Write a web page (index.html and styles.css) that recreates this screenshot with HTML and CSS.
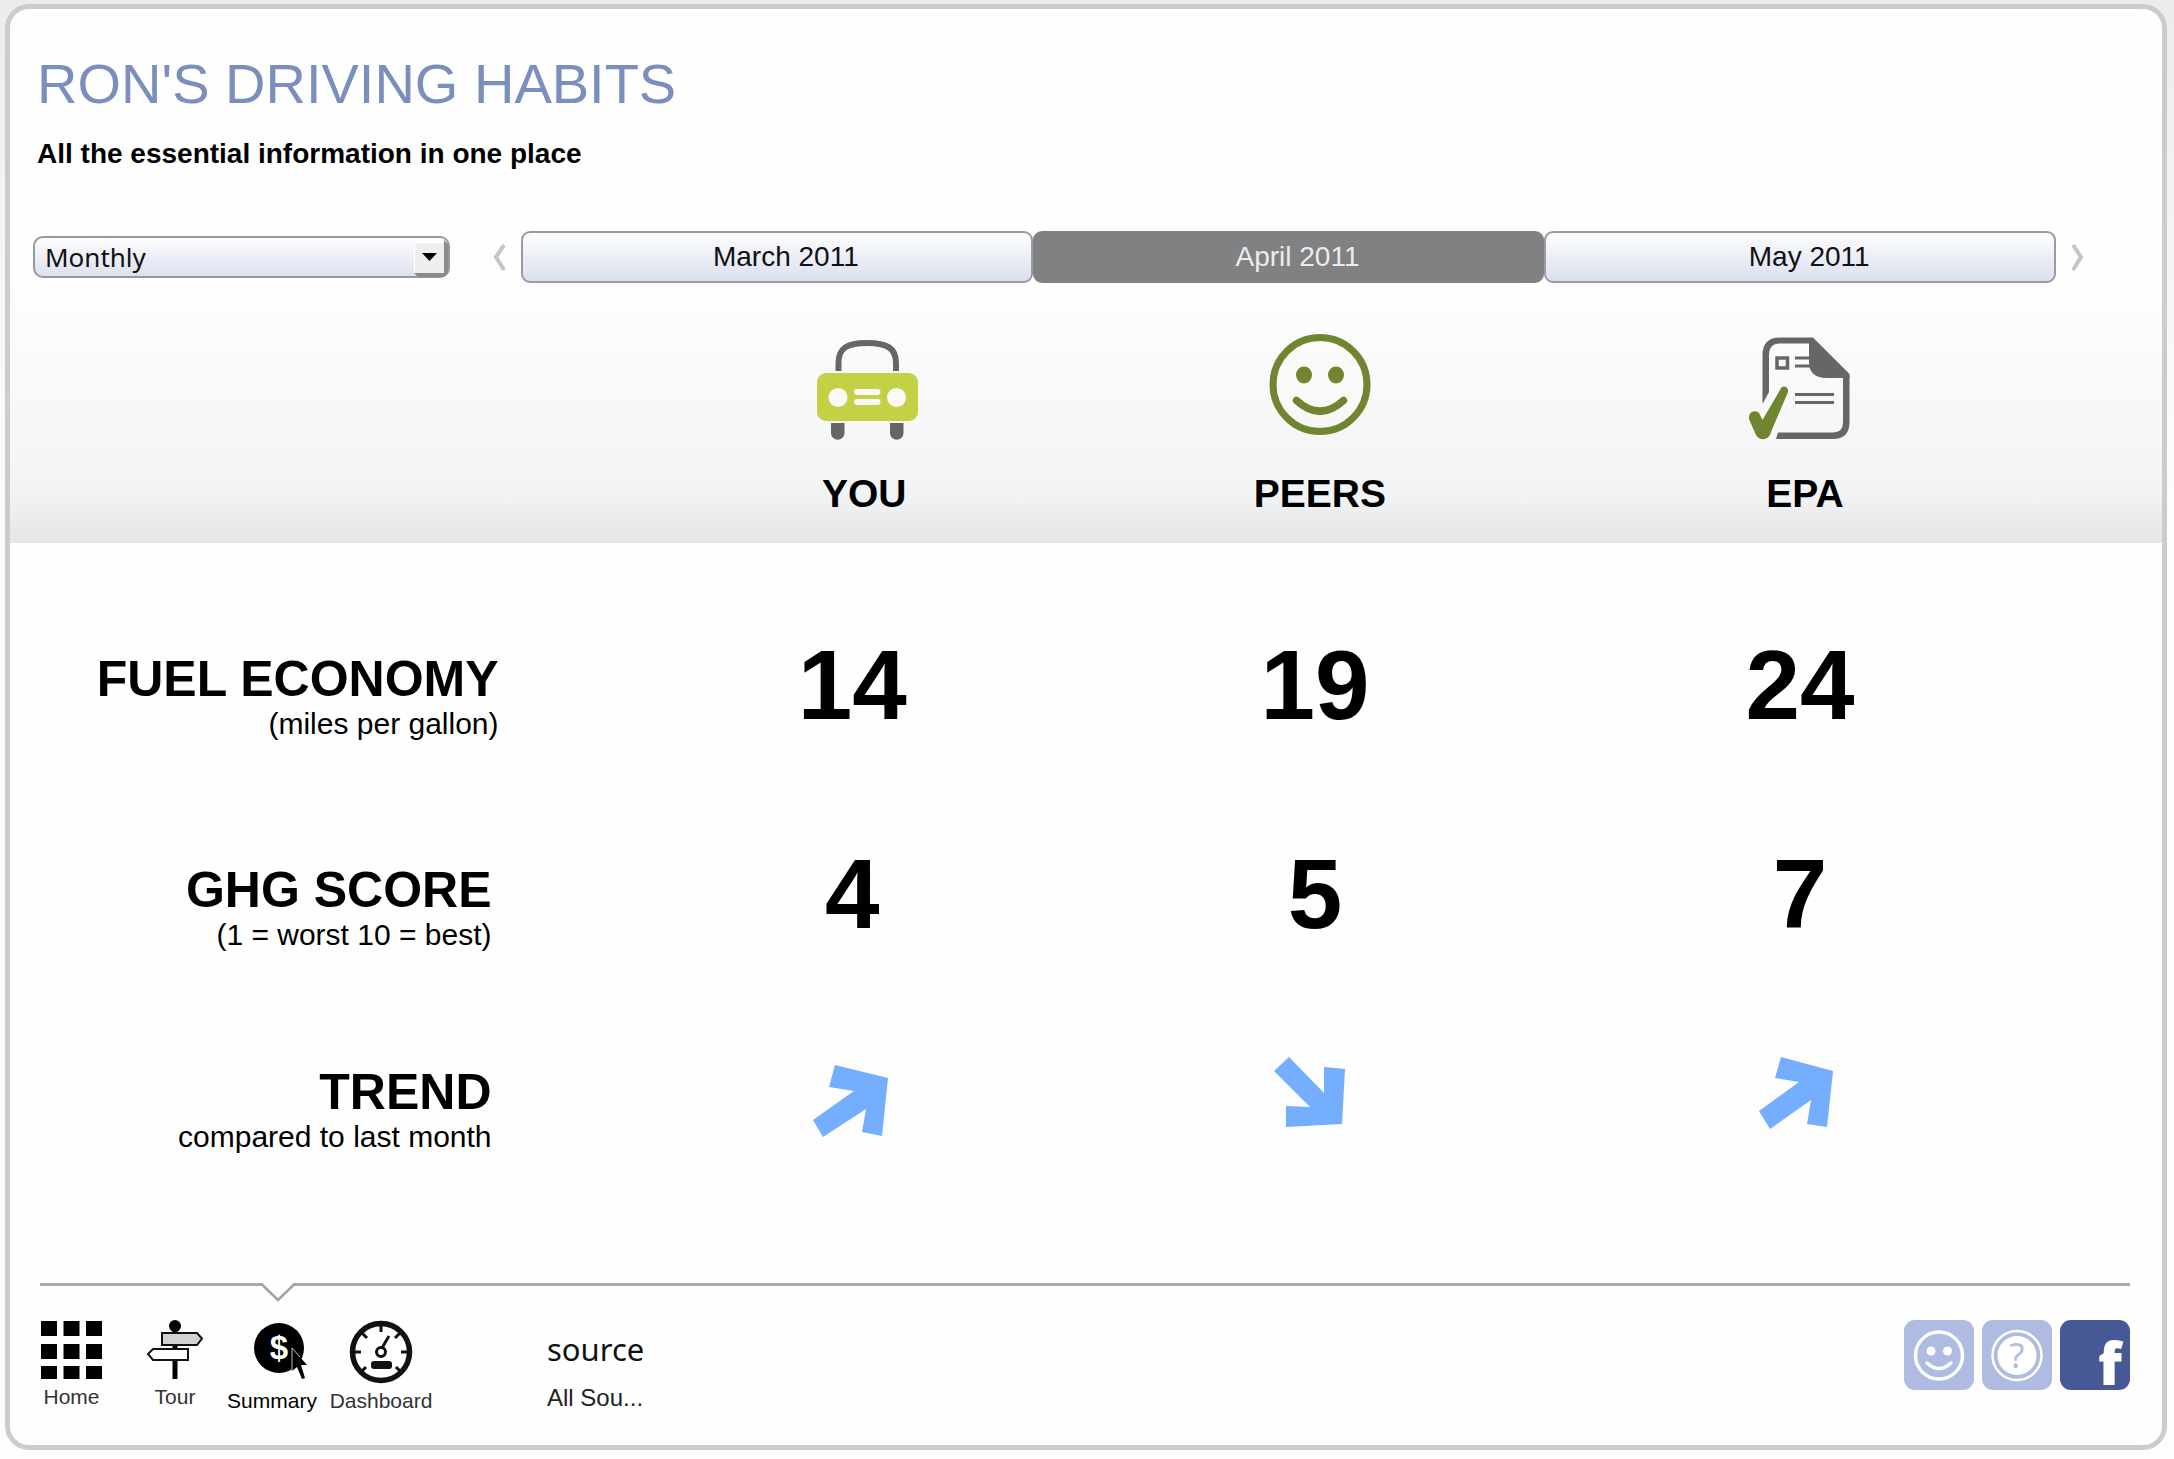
FILE: index.html
```
<!DOCTYPE html>
<html lang="en">
<head>
<meta charset="utf-8">
<meta name="viewport" content="width=device-width, initial-scale=1">
<title>Ron's Driving Habits</title>
<link rel="stylesheet" href="styles.css">
</head>
<body>
<main class="card">
  <header class="intro">
    <h1 class="title">RON'S DRIVING HABITS</h1>
    <p class="subtitle">All the essential information in one place</p>
  </header>

  <div class="toolbar">
    <div class="period">
      <select class="period-select" aria-label="Period">
        <option>Monthly</option>
        <option>Weekly</option>
        <option>Yearly</option>
      </select>
      <svg class="period-arrow" viewBox="0 0 36 42" aria-hidden="true">
        <path d="M4 41 L0 37 L30 37 L30 4 L34 8 V34 Q34 41 27 41 Z" fill="#8a8b8d"/>
        <path d="M0 7 H30 V37 H0 Z" fill="#efefef"/>
        <path d="M0 37 V6 H30" fill="none" stroke="#fff" stroke-width="2"/>
        <path d="M8 17 H23 L15.500 25 Z" fill="#000"/>
      </svg>
    </div>
    <button class="step step-prev" type="button" aria-label="Previous month">
      <svg width="13" height="27" viewBox="0 0 13 27" aria-hidden="true"><path d="M11 1 L3 13 L11 26" fill="none" stroke="#c4c4ca" stroke-width="4"/></svg>
    </button>
    <div class="months">
      <button class="month" type="button">March 2011</button>
      <button class="month month-current" type="button" aria-pressed="true">April 2011</button>
      <button class="month" type="button">May 2011</button>
    </div>
    <button class="step step-next" type="button" aria-label="Next month">
      <svg width="13" height="27" viewBox="0 0 13 27" aria-hidden="true"><path d="M2 1 L10 13 L2 26" fill="none" stroke="#c4c4ca" stroke-width="4"/></svg>
    </button>
  </div>

  <table class="summary">
    <colgroup><col class="col-label"><col class="col-you"><col class="col-peers"><col class="col-epa"></colgroup>
    <thead>
      <tr>
        <td></td>
        <th scope="col" class="head-you">
          <svg class="head-icon" width="108" height="106" viewBox="0 0 108 106" aria-hidden="true">
            <path d="M28.500 37 V29 C28.500 14 37 9 57 9 C77 9 86 14 86 29 V37" fill="none" stroke="#666" stroke-width="6"/>
            <rect x="7" y="39" width="101" height="48" rx="9" fill="#c4d144"/>
            <circle cx="28" cy="63.500" r="9.500" fill="#f9f9f9"/><circle cx="86.500" cy="63.500" r="9.500" fill="#f9f9f9"/>
            <rect x="44" y="55" width="26.500" height="6" rx="3" fill="#f9f9f9"/><rect x="44" y="65" width="26.500" height="6" rx="3" fill="#f9f9f9"/>
            <path d="M21 89 H34.500 V99 a6.750 6.750 0 0 1 -13.500 0 Z M80 89 H93.500 V99 a6.750 6.750 0 0 1 -13.500 0 Z" fill="#666"/>
          </svg>
          <span class="head-text">YOU</span>
        </th>
        <th scope="col">
          <svg class="head-icon" width="102" height="106" viewBox="0 0 102 106" aria-hidden="true">
            <circle cx="51" cy="50.500" r="47" fill="none" stroke="#6f852f" stroke-width="7"/>
            <ellipse cx="35" cy="41" rx="8" ry="8.500" fill="#6f852f"/><ellipse cx="67" cy="41" rx="8" ry="8.500" fill="#6f852f"/>
            <path d="M27.500 66.500 Q51 88 74.500 66.500" fill="none" stroke="#6f852f" stroke-width="7.500" stroke-linecap="round"/>
          </svg>
          <span class="head-text">PEERS</span>
        </th>
        <th scope="col" class="cell-last">
          <svg class="head-icon" width="112" height="106" viewBox="0 0 112 106" aria-hidden="true">
            <path d="M13.500 70 L20 58 V21 Q20 9.500 31 9.500 H60 V3.500 H31 Q13.500 3.500 13.500 21 Z" fill="#666"/>
            <path d="M29 98.500 H84 Q94 98.500 94 88 V42 H100.500 V88 Q100.500 105 84 105 H27 Z" fill="#666"/>
            <path d="M64 3.500 L100.500 40 V44 H78 Q60 44 60 28 V3.500 Z" fill="#666"/>
            <rect x="28" y="24" width="10.500" height="10" fill="none" stroke="#666" stroke-width="3.500"/>
            <path d="M46 24 H61 M46 32 H62 M46 60.500 H85 M46 68.500 H85" stroke="#666" stroke-width="3"/>
            <path d="M0 85 C-1 78 6 75 10 79 L13.500 86 L31 56 C33 50 40 52 39 58 L22 98 C20 107 10 107 7 101 Z" fill="#6f852f"/>
          </svg>
          <span class="head-text">EPA</span>
        </th>
      </tr>
    </thead>
    <tbody>
      <tr class="row-fuel">
        <th scope="row"><span class="row-name">FUEL ECONOMY</span><span class="row-note">(miles per gallon)</span></th>
        <td>14</td><td>19</td><td class="cell-last">24</td>
      </tr>
      <tr class="row-ghg">
        <th scope="row"><span class="row-name">GHG SCORE</span><span class="row-note">(1 = worst 10 = best)</span></th>
        <td>4</td><td>5</td><td class="cell-last">7</td>
      </tr>
      <tr class="row-trend">
        <th scope="row"><span class="row-name">TREND</span><span class="row-note">compared to last month</span></th>
        <td>
          <svg class="trend" width="120" height="118" viewBox="0 0 120 118" role="img" aria-label="Up">
            <path d="M25 8 L120 24 L103 117 L10 100 Z" fill="#fcfdfc"/>
            <path d="M43 22 L96 35 L90 93 L70 89 L74 66 L31 94 L21 77 L62 48 L37 44 Z" fill="#75aeff"/>
          </svg>
        </td>
        <td>
          <svg class="trend" width="120" height="118" viewBox="0 0 120 118" role="img" aria-label="Down">
            <path d="M6 7 H102 V103 H6 Z" fill="#fcfdfc"/>
            <path d="M34 14 L69 50 V24 L90 26 L87 81 L31 84 V63 L55 64 L19 28 Z" fill="#75aeff"/>
          </svg>
        </td>
        <td class="cell-last">
          <svg class="trend" width="120" height="118" viewBox="0 0 120 118" role="img" aria-label="Up">
            <path d="M22 0 L117 16 L100 110 L7 93 Z" fill="#fcfdfc"/>
            <path d="M41 14 L93 28 L87 84 L67 81 L71 57 L30 86 L19 68 L59 39 L35 35 Z" fill="#75aeff"/>
          </svg>
        </td>
      </tr>
    </tbody>
  </table>

  <footer class="footer">
    <hr class="rule">
    <div class="footer-row">
      <nav class="nav" aria-label="Main">
        <a class="nav-item" href="#home">
          <svg width="61" height="60" viewBox="0 0 61 60" aria-hidden="true"><path d="M0 1H16V16H0Z M22.500 1H38.500V16H22.500Z M45 1H61V16H45Z M0 24H16V39H0Z M22.500 24H38.500V39H22.500Z M45 24H61V39H45Z M0 46H16V59H0Z M22.500 46H38.500V59H22.500Z M45 46H61V59H45Z" fill="#000"/></svg>
          <span>Home</span>
        </a>
        <a class="nav-item" href="#tour">
          <svg width="58" height="60" viewBox="0 0 58 60" aria-hidden="true">
            <circle cx="29" cy="6" r="6" fill="#000"/><path d="M26.500 6 H31.500 V59 H26.500 Z" fill="#000"/>
            <path d="M16 13 H51 L56 18.500 L51 25 H16 Z" fill="#d2d2d5" stroke="#111" stroke-width="2"/>
            <path d="M42 29 H7 L2 34 L7 40 H42 Z" fill="#fff" stroke="#111" stroke-width="2"/>
          </svg>
          <span>Tour</span>
        </a>
        <a class="nav-item nav-current" href="#summary" aria-current="page">
          <svg class="notch" width="38" height="20" viewBox="0 0 38 20" aria-hidden="true"><path d="M3 0 H35 L19 17 Z" fill="#fefefe"/><path d="M0 1.500 H3 L19 17 L35 1.500 H38" fill="none" stroke="#a3a3a3" stroke-width="2.500"/></svg>
          <svg width="70" height="64" viewBox="0 0 70 64" aria-hidden="true">
            <circle cx="42" cy="28" r="25" fill="#000"/>
            <text x="42" y="39" text-anchor="middle" class="glyph-dollar">$</text>
            <path d="M55 28 V51 L60 47 L65 59 L68 58 L64 45 H70 Z" fill="#000"/>
            <path d="M55 51 V28 L63 37" fill="none" stroke="#bbb" stroke-width="1"/>
          </svg>
          <span>Summary</span>
        </a>
        <a class="nav-item" href="#dashboard">
          <svg width="64" height="64" viewBox="0 0 64 64" aria-hidden="true">
            <circle cx="32" cy="32" r="28.500" fill="#fff" stroke="#111" stroke-width="5.500"/>
            <path d="M32 4 V12 M4 32 H12 M52 32 H60 M12 12 L18 18 M52 12 L46 18 M12 52 L17 47 M52 52 L47 47" stroke="#111" stroke-width="3"/>
            <circle cx="32" cy="32" r="4.500" fill="none" stroke="#111" stroke-width="3"/>
            <path d="M33.500 27 L40 16" stroke="#111" stroke-width="3"/>
            <rect x="22" y="41" width="21" height="8" rx="3" fill="#111"/>
          </svg>
          <span>Dashboard</span>
        </a>
      </nav>
      <div class="source">
        <span class="source-label">source</span>
        <a class="source-value" href="#sources">All Sou...</a>
      </div>
      <div class="actions">
        <button class="action" type="button" aria-label="Community">
          <svg width="70" height="70" viewBox="0 0 70 70" aria-hidden="true">
            <circle cx="35" cy="35.500" r="23.500" fill="none" stroke="#fff" stroke-width="3.500"/>
            <circle cx="27" cy="31" r="4.500" fill="#fff"/><circle cx="43.500" cy="31" r="4.500" fill="#fff"/>
            <path d="M23 43 Q35 54 47 43" fill="none" stroke="#fff" stroke-width="3.500" stroke-linecap="round"/>
          </svg>
        </button>
        <button class="action" type="button" aria-label="Help">
          <svg width="70" height="70" viewBox="0 0 70 70" aria-hidden="true">
            <circle cx="35" cy="35.500" r="24.500" fill="none" stroke="#fff" stroke-width="2.500"/>
            <circle cx="35" cy="35.500" r="19.500" fill="#fff"/>
            <text x="35" y="48" text-anchor="middle" class="glyph-help">?</text>
          </svg>
        </button>
        <button class="action action-facebook" type="button" aria-label="Facebook">
          <svg width="70" height="70" viewBox="0 0 70 70" aria-hidden="true"><text x="50" y="65" text-anchor="middle" class="glyph-facebook">f</text></svg>
        </button>
      </div>
    </div>
  </footer>
</main>
</body>
</html>
```
FILE: styles.css
```
* {
  box-sizing: border-box;
}

body {
  margin: 0;
  padding: 4px 7px 9px 5px;
  min-height: 100vh;
  display: flex;
  flex-direction: column;
  background: linear-gradient(#ebedec, #fdfdfd 500px) #fdfdfd;
  color: #000;
  font-family: "Liberation Sans", Arial, Helvetica, sans-serif;
}

.card {
  flex: 1;
  display: flex;
  flex-direction: column;
  border: 5px solid #ccc;
  border-radius: 24px;
  background: #fefefe;
}

.intro {
  padding: 43px 27px 61px;
}

.title {
  margin: 0 0 22px;
  font-size: 56px;
  line-height: 64px;
  font-weight: 400;
  color: #7a8fbe;
}

.subtitle {
  margin: 0;
  font-size: 28px;
  line-height: 32px;
  font-weight: 700;
}

/* Period picker and months */
.toolbar {
  display: flex;
  align-items: center;
  padding: 0 63px 0 23px;
}

.period {
  position: relative;
  flex: none;
  width: 417px;
}

.period-select {
  display: block;
  width: 100%;
  height: 42px;
  padding: 0 40px 0 10px;
  appearance: none;
  border: 2px solid #96989d;
  border-radius: 10px;
  background: linear-gradient(#fdfdfe, #dce1f0);
  color: #111;
  font: 26px/36px "Noto Sans", "Open Sans", sans-serif;
}

.period-arrow {
  position: absolute;
  top: 0;
  right: 0;
  width: 36px;
  height: 42px;
  pointer-events: none;
}

.step {
  flex: none;
  display: flex;
  align-items: center;
  justify-content: center;
  width: 43px;
  height: 52px;
  padding: 0;
  border: 0;
  background: none;
}

.step-prev {
  margin-left: 28px;
}

.months {
  flex: 1;
  display: flex;
}

.month {
  flex: 1;
  height: 52px;
  padding: 0 0 0 18px;
  border: 2px solid #999b9f;
  border-radius: 9px;
  background: linear-gradient(#fdfdfe, #dbe0ef);
  color: #111;
  font: 28px/32px "Liberation Sans", Arial, sans-serif;
}

.month-current {
  border-color: #808182;
  background: #808182;
  color: #ececec;
}

/* Comparison table */
.summary {
  width: 100%;
  table-layout: fixed;
  border-collapse: collapse;
}

.col-label {
  width: 28%;
}

.col-you {
  width: 22%;
}

.col-peers {
  width: 21%;
}

.summary th,
.summary td {
  padding: 0 0 0 6px;
  vertical-align: top;
  text-align: center;
}

.summary thead tr {
  height: 260px;
  background: linear-gradient(#fefefe, #f5f5f5 180px, #f1f2f4 215px, #e4e5e7);
}

.summary thead th {
  padding: 51px 0 0 16px;
}

.summary thead .head-you {
  padding-left: 30px;
}

.summary .cell-last,
.summary thead .cell-last {
  padding-right: 106px;
}

.head-icon {
  display: block;
  margin: 0 auto 31px;
}

.head-text {
  display: block;
  font-size: 39px;
  line-height: 46px;
}

.summary tbody td {
  padding-top: 84px;
  font-size: 98px;
  line-height: 116px;
  font-weight: 700;
}

.summary tbody th {
  padding: 109px 121px 0 0;
  text-align: right;
}

.summary .row-fuel th {
  padding-right: 114px;
}

.row-fuel {
  height: 211px;
}

.row-ghg {
  height: 202px;
}

.summary .row-ghg td {
  padding-top: 82px;
}

.summary .row-trend td {
  padding-top: 87px;
}

.trend {
  display: block;
  margin: 0 auto;
}

.row-name {
  display: block;
  font-size: 50px;
  line-height: 54px;
}

.row-note {
  display: block;
  font-size: 30px;
  line-height: 36px;
  font-weight: 400;
}

/* Footer */
.footer {
  margin-top: auto;
}

.rule {
  height: 3px;
  margin: 0 32px 0 30px;
  border: 0;
  background: #aaa;
}

.footer-row {
  display: flex;
  align-items: flex-start;
  padding: 34px 32px 32px 10px;
}

.nav {
  display: grid;
  grid-template-columns: 103px 104px 90px 128px;
}

.nav-item {
  position: relative;
  display: flex;
  flex-direction: column;
  align-items: center;
  gap: 5px;
  color: #333;
  font-size: 21px;
  line-height: 24px;
  text-decoration: none;
}

.nav-current {
  color: #000;
}

.notch {
  position: absolute;
  top: -37px;
  left: 32px;
}

.source {
  display: flex;
  flex-direction: column;
  gap: 14px;
  margin-left: 102px;
  padding-top: 8px;
}

.source-label {
  color: #111;
  font: 31px/42px "Noto Sans", "Open Sans", sans-serif;
}

.source-value {
  color: #222;
  font-size: 24px;
  line-height: 28px;
  text-decoration: none;
}

.actions {
  display: flex;
  gap: 8px;
  margin-left: auto;
}

.action {
  width: 70px;
  height: 70px;
  padding: 0;
  border: 0;
  border-radius: 11px;
  background: #afbbe0;
}

.action svg {
  display: block;
  overflow: visible;
}

.action-facebook {
  background: #465895;
}

.glyph-dollar {
  fill: #fff;
  font: 700 33px "Liberation Sans", Arial, sans-serif;
}

.glyph-help {
  fill: #afbbe0;
  font: 34px "Noto Sans", sans-serif;
}

.glyph-facebook {
  fill: #fff;
  font: 800 58px "Open Sans", "Noto Sans", sans-serif;
}
```
